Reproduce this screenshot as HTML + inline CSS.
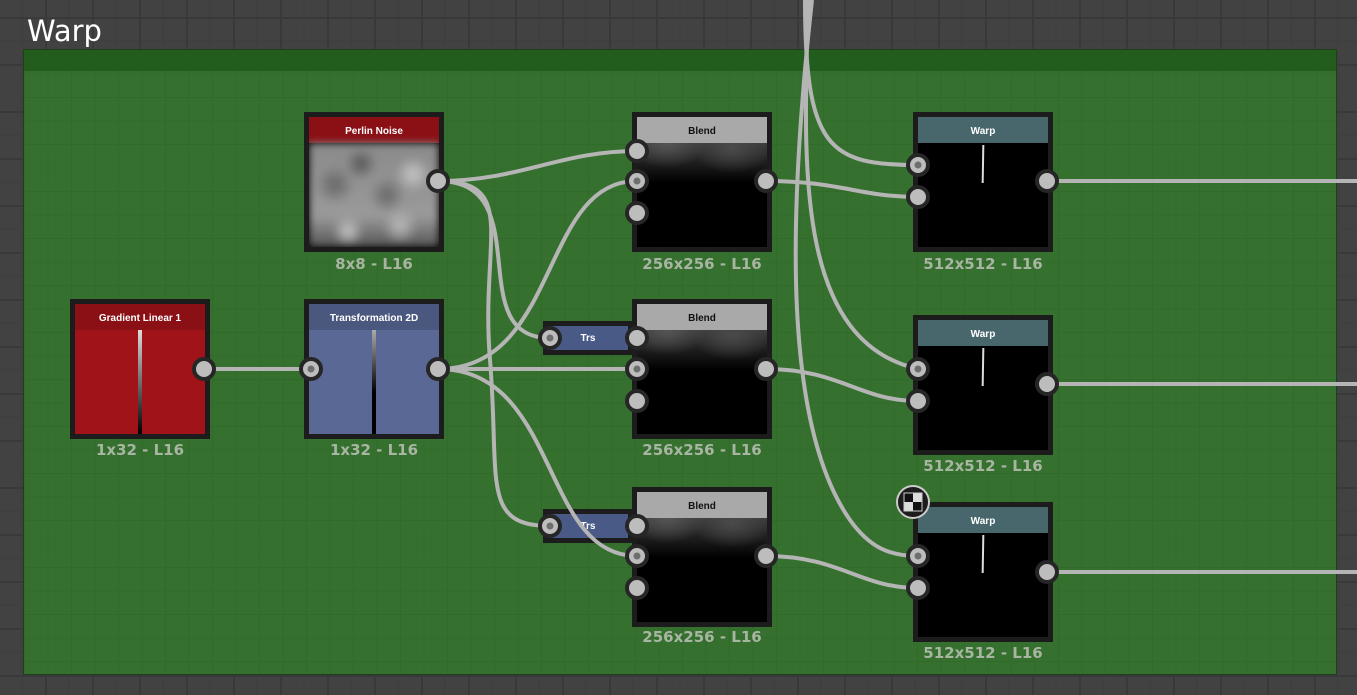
<!DOCTYPE html>
<html><head><meta charset="utf-8"><style>
*{margin:0;padding:0;box-sizing:border-box}
body{width:1357px;height:695px;overflow:hidden;position:relative;background:#424242;
background-image:linear-gradient(#393939 2px,transparent 2px),linear-gradient(90deg,#393939 2px,transparent 2px),linear-gradient(#3e3e3e 1px,transparent 1px),linear-gradient(90deg,#3e3e3e 1px,transparent 1px);
background-size:47px 47px,47px 47px,23.5px 23.5px,23.5px 23.5px;background-position:-2px 17px;font-family:"Liberation Sans",sans-serif}
.title{position:absolute;left:27px;top:14px;font-size:29px;color:#fff;font-family:"DejaVu Sans","Liberation Sans",sans-serif}
.frame{position:absolute;left:23px;top:49px;width:1314px;height:626px;background:#35702f;border:1px solid #1f3f1c;
background-image:linear-gradient(#316b2c 1px,transparent 1px),linear-gradient(90deg,#316b2c 1px,transparent 1px);background-size:23.5px 23.5px}
.fh{position:absolute;left:24px;top:50px;width:1312px;height:21px;background:#225d1e}
svg{position:absolute;left:0;top:0}
.n{position:absolute;width:140px;height:140px;border:5px solid #1c1c1c;background:#000;overflow:hidden}
.t{height:26px;line-height:29px;text-align:center;color:#fff;font-size:10px;font-weight:bold}
.l{position:absolute;width:200px;text-align:center;color:#a9b5a3;font-weight:bold;font-size:15px;font-family:"DejaVu Sans","Liberation Sans",sans-serif}
.trs{position:absolute;width:90px;height:34px;background:#1c1c1c;padding:5px}
.trs div{background:#4a5a86;height:24px;line-height:26px;color:#fff;font-size:10px;font-weight:bold;text-align:center}
.bl .t{background:#a9a9a9;color:#111}
.bl .p{height:104px;background:radial-gradient(ellipse 40px 25px at 30px 0px,#555,transparent),radial-gradient(ellipse 40px 25px at 95px 5px,#4a4a4a,transparent),linear-gradient(#3c3c3c,#000 40px)}
.wp .t{background:#48676c}
.wp .p{position:relative;height:104px}
.wp .p i{position:absolute;left:64px;top:2px;width:2px;height:38px;background:#ddd;transform:rotate(1deg)}
</style></head><body>
<div class="title">Warp</div>
<div class="frame"></div><div class="fh"></div>

<div class="n" style="left:304px;top:112px"><div class="t" style="background:#8a1016">Perlin Noise</div>
<div style="height:104px;filter:blur(4px);background:radial-gradient(circle at 40% 20%,#555 0,transparent 16px),radial-gradient(circle at 60% 50%,#666 0,transparent 18px),radial-gradient(circle at 20% 40%,#666 0,transparent 20px),radial-gradient(circle at 80% 30%,#c8c8c8 0,transparent 18px),radial-gradient(circle at 30% 85%,#c8c8c8 0,transparent 16px),radial-gradient(circle at 70% 80%,#bbb 0,transparent 18px),linear-gradient(#8a8a8a,#9a9a9a 70%,#555)"></div></div>
<div class="l" style="left:274px;top:255px">8x8 - L16</div>

<div class="n" style="left:70px;top:299px;background:#a01319"><div class="t" style="background:#8a1016">Gradient Linear 1</div>
<div style="position:absolute;left:63px;top:26px;width:4px;height:104px;background:linear-gradient(#ddd,#000)"></div></div>
<div class="l" style="left:40px;top:441px">1x32 - L16</div>

<div class="n" style="left:304px;top:299px;background:#5a6896"><div class="t" style="background:#4a5880">Transformation 2D</div>
<div style="position:absolute;left:63px;top:26px;width:4px;height:104px;background:linear-gradient(#aaa,#000 60%)"></div></div>
<div class="l" style="left:274px;top:441px">1x32 - L16</div>

<div class="n bl" style="left:632px;top:112px"><div class="t">Blend</div><div class="p"></div></div>
<div class="l" style="left:602px;top:255px">256x256 - L16</div>
<div class="n bl" style="left:632px;top:299px"><div class="t">Blend</div><div class="p"></div></div>
<div class="l" style="left:602px;top:441px">256x256 - L16</div>
<div class="n bl" style="left:632px;top:487px"><div class="t">Blend</div><div class="p"></div></div>
<div class="l" style="left:602px;top:628px">256x256 - L16</div>

<div class="trs" style="left:543px;top:321px"><div>Trs</div></div>
<div class="trs" style="left:543px;top:509px"><div>Trs</div></div>

<div class="n wp" style="left:913px;top:112px"><div class="t">Warp</div><div class="p"><i></i></div></div>
<div class="l" style="left:883px;top:255px">512x512 - L16</div>
<div class="n wp" style="left:913px;top:315px"><div class="t">Warp</div><div class="p"><i></i></div></div>
<div class="l" style="left:883px;top:457px">512x512 - L16</div>
<div class="n wp" style="left:913px;top:502px"><div class="t">Warp</div><div class="p"><i></i></div></div>
<div class="l" style="left:883px;top:644px">512x512 - L16</div>

<svg width="1357" height="695" viewBox="0 0 1357 695">
<g fill="none" stroke="#b5b5b5" stroke-width="4">
<path d="M204 369H311"/>
<path d="M438 181C520 181 560 151 637 151"/>
<path d="M438 181C540 181 460 338 550 338"/>
<path d="M438 181C520 181 480 240 490 360C500 480 480 526 550 526"/>
<path d="M438 369C560 369 540 181 637 181"/>
<path d="M438 369H637"/>
<path d="M438 369C560 369 540 556 637 556"/>
<path d="M766 181C840 181 860 197 918 197"/>
<path d="M766 369C840 369 860 401 918 401"/>
<path d="M766 556C840 556 860 588 918 588"/>
<path d="M805 0C805 150 830 165 918 165"/>
<path d="M808 0C805 150 790 340 918 369"/>
<path d="M812 0C790 200 780 420 850 520C870 548 890 556 918 556"/>
<path d="M1047 181H1357"/><path d="M1047 384H1357"/><path d="M1047 572H1357"/>
</g>
<g fill="#bdbdbd" stroke="#262626" stroke-width="4">
<circle cx="204" cy="369" r="10"/><circle cx="311" cy="369" r="10"/><circle cx="438" cy="369" r="10"/><circle cx="438" cy="181" r="10"/>
<circle cx="637" cy="151" r="10"/><circle cx="637" cy="181" r="10"/><circle cx="637" cy="213" r="10"/><circle cx="766" cy="181" r="10"/>
<circle cx="637" cy="338" r="10"/><circle cx="637" cy="369" r="10"/><circle cx="637" cy="401" r="10"/><circle cx="766" cy="369" r="10"/>
<circle cx="637" cy="526" r="10"/><circle cx="637" cy="556" r="10"/><circle cx="637" cy="588" r="10"/><circle cx="766" cy="556" r="10"/>
<circle cx="550" cy="338" r="10"/><circle cx="550" cy="526" r="10"/>
<circle cx="918" cy="165" r="10"/><circle cx="918" cy="197" r="10"/><circle cx="1047" cy="181" r="10"/>
<circle cx="918" cy="369" r="10"/><circle cx="918" cy="401" r="10"/><circle cx="1047" cy="384" r="10"/>
<circle cx="918" cy="556" r="10"/><circle cx="918" cy="588" r="10"/><circle cx="1047" cy="572" r="10"/>
</g>
<g fill="#6e6e6e">
<circle cx="311" cy="369" r="3.5"/><circle cx="637" cy="181" r="3.5"/><circle cx="637" cy="369" r="3.5"/><circle cx="637" cy="556" r="3.5"/>
<circle cx="550" cy="338" r="3.5"/><circle cx="550" cy="526" r="3.5"/>
<circle cx="918" cy="165" r="3.5"/><circle cx="918" cy="369" r="3.5"/><circle cx="918" cy="556" r="3.5"/>
</g>
<circle cx="913" cy="502" r="16" fill="#1c1c1c" stroke="#ccc" stroke-width="2"/>
<rect x="904" y="493" width="9" height="9" fill="#111"/><rect x="913" y="493" width="9" height="9" fill="#ddd"/>
<rect x="904" y="502" width="9" height="9" fill="#ddd"/><rect x="913" y="502" width="9" height="9" fill="#111"/>
<rect x="904" y="493" width="18" height="18" fill="none" stroke="#ccc" stroke-width="1"/>
</svg>
</body></html>
